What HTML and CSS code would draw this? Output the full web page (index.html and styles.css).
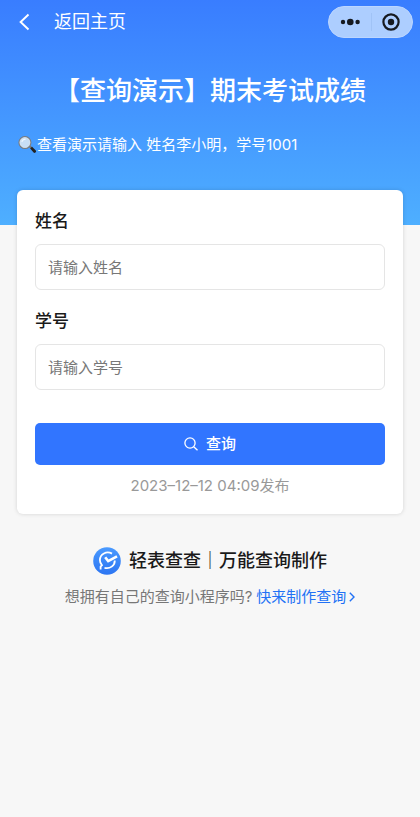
FILE: index.html
```html
<!DOCTYPE html>
<html lang="zh-CN">
<head>
<meta charset="utf-8">
<meta name="viewport" content="width=device-width, initial-scale=1">
<title>期末考试成绩</title>
<link rel="stylesheet" href="styles.css">
</head>
<body>
<header class="hero">
  <nav class="navbar">
    <a class="back" href="#">
      <svg class="back-icon" viewBox="0 0 12 18" aria-hidden="true"><path d="M10.5 1.5 2.6 9l7.9 7.5" fill="none" stroke="currentColor" stroke-width="1.9"/></svg>
      <span>返回主页</span>
    </a>
    <div class="capsule">
      <button class="capsule-btn" type="button" aria-label="更多">
        <svg class="dots" viewBox="0 0 20 8" aria-hidden="true"><circle cx="3" cy="4" r="2.2"/><circle cx="10.3" cy="4" r="3.3"/><circle cx="17.6" cy="4" r="2.2"/></svg>
      </button>
      <button class="capsule-btn divided" type="button" aria-label="关闭">
        <svg class="target" viewBox="0 0 18 18" aria-hidden="true"><circle cx="9" cy="9" r="7.6" fill="none" stroke="currentColor" stroke-width="2.2"/><circle cx="9" cy="9" r="3.2"/></svg>
      </button>
    </div>
  </nav>
  <h1 class="title">【查询演示】期末考试成绩</h1>
  <p class="notice">
    <svg class="lens" viewBox="0 0 20 20" aria-hidden="true">
      <path d="m11.5 12 1.6-1.6 2.2 2.2-1.6 1.6z" fill="#777"/>
      <path d="m12.8 13.8 2-2 4 4.1q.8 1.3-.4 2.1-1 .9-2 0z" fill="#222"/>
      <circle cx="7.3" cy="7.4" r="6.2" fill="#c8def5" stroke="#777b80" stroke-width="1.4"/>
      <circle cx="7.3" cy="7.4" r="5.3" fill="none" stroke="#dce4eb" stroke-width=".7"/>
      <path d="M4 6.5Q5 3.8 8 3.8" fill="none" stroke="#eef7ff" stroke-width="1.4"/>
    </svg>
    <span>查看演示请输入 姓名李小明，学号1001</span>
  </p>
</header>
<main>
  <form class="card">
    <label class="label" for="name">姓名</label>
    <input class="field" id="name" type="text" placeholder="请输入姓名">
    <label class="label" for="number">学号</label>
    <input class="field" id="number" type="text" placeholder="请输入学号">
    <button class="submit" type="button">
      <svg class="search" viewBox="0 0 14 14" aria-hidden="true"><circle cx="6" cy="6" r="5.1"/><path d="m9.7 9.7 3.8 3.6"/></svg>
      <span>查询</span>
    </button>
    <p class="date">2023–12–12 04:09发布</p>
  </form>
</main>
<footer class="footer">
  <div class="brand">
    <svg class="logo" viewBox="0 0 28 28" aria-hidden="true">
      <defs><linearGradient id="logo-fill" x1="0" y1="0" x2="0" y2="1"><stop offset="0" stop-color="#4a9aff"/><stop offset="1" stop-color="#2c75f2"/></linearGradient></defs>
      <circle cx="14" cy="14" r="13.8" fill="url(#logo-fill)"/>
      <path d="M19 6.6C13.5 3.6 7 7 6.9 13c0 2.200.8 3.900 2 5.200L7.600 19.500V22.500M11.500 20.800c5.500 1.300 10.300-2 10.300-7.300" fill="none" stroke="#fff" stroke-width="1.8"/>
      <path d="m12.200 10.200 3 3.900 8.800-4.700" fill="none" stroke="#fff" stroke-width="2.600"/>
    </svg>
    <span>轻表查查｜万能查询制作</span>
  </div>
  <p class="promo">
    <span>想拥有自己的查询小程序吗?</span>
    <a class="promo-link" href="#">快来制作查询<svg class="chevron" viewBox="0 0 6 10" aria-hidden="true"><path d="m.8.8 4.2 4.2L.8 9.2" fill="none" stroke="currentColor" stroke-width="1.4"/></svg></a>
  </p>
</footer>
</body>
</html>
```
FILE: styles.css
```css
* {
  box-sizing: border-box;
}

body {
  margin: 0;
  min-height: 100vh;
  background: #f7f7f7;
  color: #1a1a1a;
  font-family: Inter, "Noto Sans CJK SC", sans-serif;
  font-size: 15px;
  line-height: 20px;
}

h1,
p {
  margin: 0;
}

svg {
  display: block;
  flex: none;
}

button,
input {
  font: inherit;
}

.hero {
  padding: 6px 7px 70px 18px;
  background: linear-gradient(#397dff, #4eafff);
  color: #fff;
}

.navbar {
  display: flex;
  align-items: center;
  justify-content: space-between;
}

.back {
  display: flex;
  align-items: center;
  gap: 24px;
  color: inherit;
  font-size: 18px;
  line-height: 24px;
  text-decoration: none;
}

.back-icon {
  width: 12px;
  height: 18px;
}

.capsule {
  display: flex;
  width: 85px;
  height: 32px;
  border: 1px solid #bcd6ff;
  border-radius: 16px;
  background: #adceff;
}

.capsule-btn {
  display: flex;
  flex: 1;
  align-items: center;
  justify-content: center;
  padding: 0;
  border: 0;
  background: none;
  color: #161a20;
}

.divided {
  background: linear-gradient(#a0c3f6, #a0c3f6) left center / 1px 18px no-repeat;
}

.dots {
  width: 20px;
  height: 8px;
  fill: currentColor;
}

.target {
  width: 18px;
  height: 18px;
  fill: currentColor;
}

.title {
  margin-top: 35px;
  padding-right: 11px;
  font-size: 26px;
  font-weight: 500;
  line-height: 36px;
  text-align: center;
}

.notice {
  display: flex;
  align-items: center;
  margin-top: 26px;
}

.lens {
  width: 19px;
  height: 20px;
}

.card {
  display: flex;
  flex-direction: column;
  margin: -35px 17px 0;
  padding: 18px;
  border-radius: 6px;
  background: #fff;
  box-shadow: 0 0 4px rgba(0, 0, 0, 0.15);
}

.label {
  padding-top: 1px;
  font-size: 17px;
  font-weight: 500;
  line-height: 24px;
}

.field {
  width: 100%;
  height: 46px;
  margin: 11px 0 18px;
  padding: 0 12px;
  border: 1px solid #e5e5e5;
  border-radius: 6px;
  background: #fff;
  color: inherit;
}

.field::placeholder {
  color: #777;
  opacity: 1;
}

.submit {
  display: flex;
  align-items: center;
  justify-content: center;
  gap: 8px;
  height: 42px;
  margin-top: 15px;
  padding: 0;
  border: 0;
  border-radius: 5px;
  background: #3175ff;
  color: #fff;
  font-weight: 500;
}

.search {
  width: 14px;
  height: 14px;
  fill: none;
  stroke: currentColor;
  stroke-width: 1.3;
}

.date {
  margin-top: 11px;
  color: #999;
  text-align: center;
}

.footer {
  padding: 33px 0;
}

.brand {
  display: flex;
  align-items: center;
  justify-content: center;
  gap: 8px;
  font-size: 18px;
  font-weight: 500;
  line-height: 28px;
}

.logo {
  width: 28px;
  height: 28px;
}

.promo {
  display: flex;
  justify-content: center;
  gap: 4px;
  margin-top: 12px;
  color: #777;
}

.promo-link {
  display: flex;
  align-items: center;
  gap: 3px;
  color: #2272f5;
  text-decoration: none;
}

.chevron {
  width: 6px;
  height: 10px;
}
```
